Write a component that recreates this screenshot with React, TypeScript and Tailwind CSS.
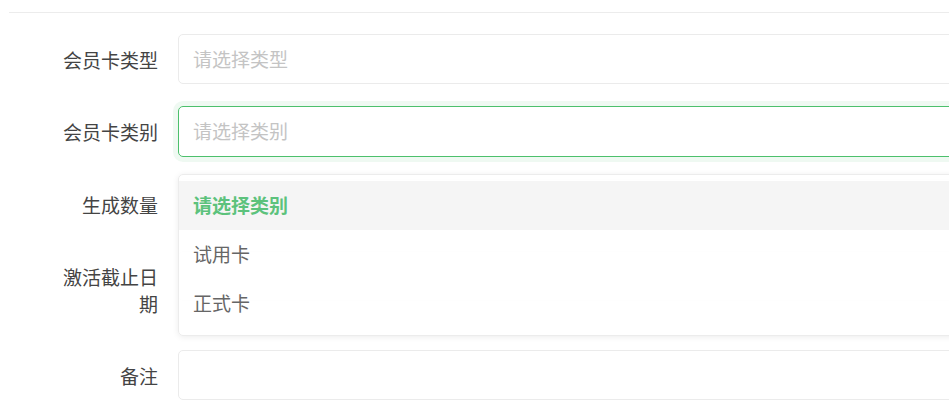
import React from 'react';

const rows = [
  { label: '会员卡类型', placeholder: '请选择类型' },
  { label: '会员卡类别', placeholder: '请选择类别', focused: true },
  { label: '生成数量', placeholder: '' },
  { label: '激活截止日期', placeholder: '' },
  { label: '备注', placeholder: '' },
];

const options = [
  { text: '请选择类别', active: true },
  { text: '试用卡' },
  { text: '正式卡' },
];

export default function App() {
  return (
    <div
      className="relative w-[949px] h-[417px] overflow-hidden bg-white text-[#333]"
      style={{ fontFamily: '"Noto Sans CJK SC", "Noto Sans", sans-serif' }}
    >
      <div className="pl-[9px] pt-[12px]">
        <div className="h-px bg-[#ececec]" />
        <form className="pl-[49px] pt-[21px]">
          {rows.map((row) => (
            <div key={row.label} className="flex items-start mb-[22px]">
              <label className="w-[100px] shrink-0 text-right text-[19px] leading-[27px] pt-[12px] pb-[11px] text-[#444]">
                {row.label}
              </label>
              <div
                className={
                  row.focused
                    ? 'ml-[20px] w-[820px] shrink-0 h-[51px] rounded-[5px] border border-[#4cc06c] shadow-[0_0_0_5px_rgba(76,192,108,0.09)] flex items-center px-[14px]'
                    : 'ml-[20px] w-[820px] shrink-0 h-[50px] rounded-[5px] border border-[#ebebeb] flex items-center px-[14px]'
                }
              >
                <span className="text-[19px] text-[#c4c4c4]">{row.placeholder}</span>
              </div>
            </div>
          ))}
        </form>
      </div>

      <div className="absolute left-[178px] top-[174px] w-[820px] rounded-[5px] border border-[#ececec] bg-white/95 shadow-[0_1px_6px_rgba(0,0,0,0.08)] pt-[6px] pb-[7px]">
        {options.map((o) => (
          <div
            key={o.text}
            className={
              o.active
                ? 'h-[49px] flex items-center px-[14px] bg-[#f5f5f5] text-[19px] font-bold text-[#5cc27c]'
                : 'h-[49px] flex items-center px-[14px] text-[19px] text-[#666]'
            }
          >
            {o.text}
          </div>
        ))}
      </div>
    </div>
  );
}
